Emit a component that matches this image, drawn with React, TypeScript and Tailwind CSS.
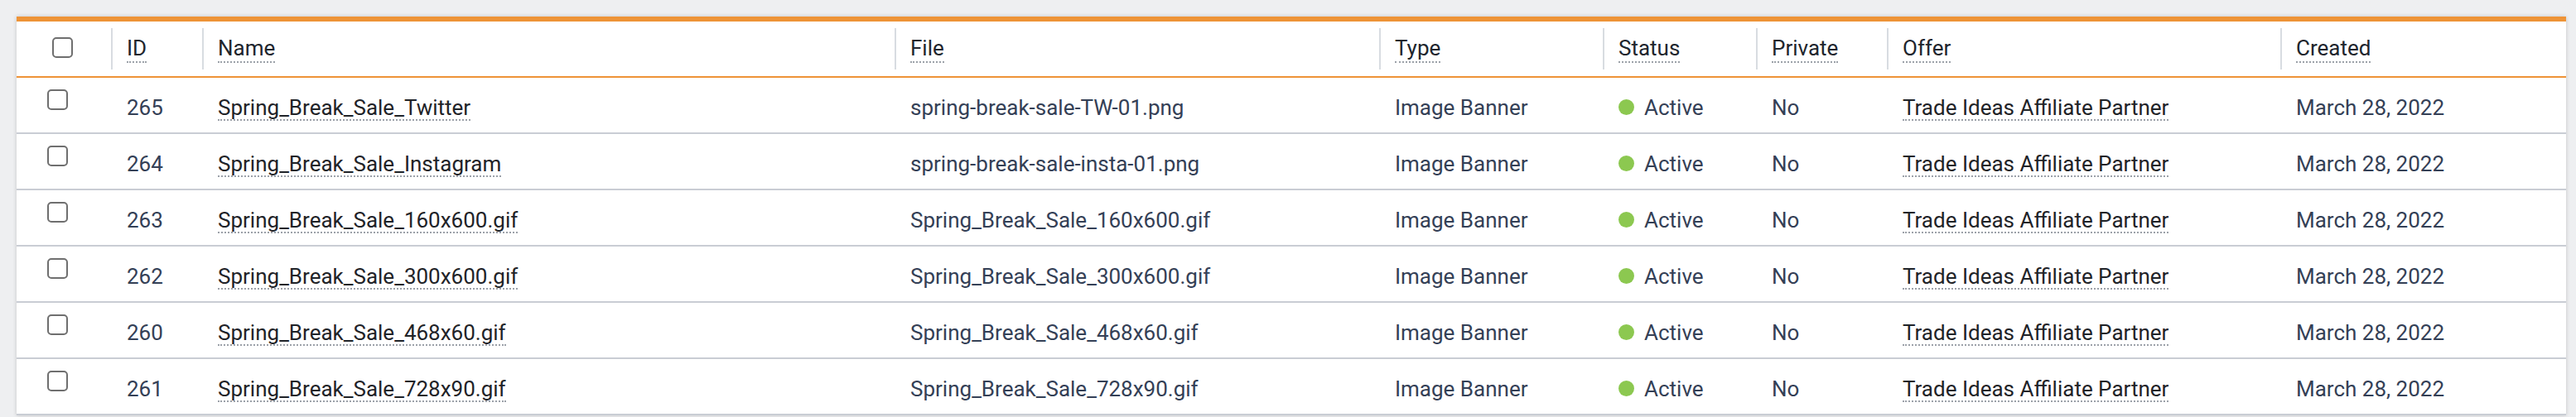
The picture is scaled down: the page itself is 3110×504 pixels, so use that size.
const creatives = [
  { id: 265, name: 'Spring_Break_Sale_Twitter', file: 'spring-break-sale-TW-01.png' },
  { id: 264, name: 'Spring_Break_Sale_Instagram', file: 'spring-break-sale-insta-01.png' },
  { id: 263, name: 'Spring_Break_Sale_160x600.gif', file: 'Spring_Break_Sale_160x600.gif' },
  { id: 262, name: 'Spring_Break_Sale_300x600.gif', file: 'Spring_Break_Sale_300x600.gif' },
  { id: 260, name: 'Spring_Break_Sale_468x60.gif', file: 'Spring_Break_Sale_468x60.gif' },
  { id: 261, name: 'Spring_Break_Sale_728x90.gif', file: 'Spring_Break_Sale_728x90.gif' },
];

const columns = ['ID', 'Name', 'File', 'Type', 'Status', 'Private', 'Offer', 'Created'];

const gridCols = 'grid grid-cols-[114px_110px_836px_585px_270px_185px_158px_475px_345px]';

const Checkbox = () => (
  <span className="block w-[25px] h-[25px] rounded-[5px] border-2 border-[#6f6f6f] bg-white" />
);

const Dotted = ({ children }: { children: React.ReactNode }) => (
  <span className="inline-block leading-[28px] border-b-2 border-dotted border-[#9ca1a9] text-[#1f2328]">
    {children}
  </span>
);

const Cell = ({ children }: { children: React.ReactNode }) => (
  <div className="pt-[17px] pl-[19px] whitespace-nowrap">{children}</div>
);

const Plain = ({ children }: { children: React.ReactNode }) => (
  <span className="inline-block leading-[28px] text-[#344056]">{children}</span>
);

export default function App() {
  return (
    <div className="min-h-[504px] bg-[#eeeff1] pt-[20px] font-['Roboto',sans-serif] text-[26px]">
      <div className="ml-[20px] w-[3078px] bg-white border-t-[6px] border-[#ee9337] shadow-[0_0_5px_rgba(0,0,0,0.18)]">
        {/* header */}
        <div className={`${gridCols} h-[68px] border-b-2 border-[#ee9337]`}>
          <div className="pl-[43px] pt-[19px]">
            <Checkbox />
          </div>
          {columns.map((col) => (
            <div key={col} className="py-[8px]">
              <div className="h-full border-l-2 border-[#d8dce1] pl-[17px] flex items-center">
                <span className="inline-block leading-[32px] border-b-2 border-dotted border-[#9ca1a9] text-[#20252d]">
                  {col}
                </span>
              </div>
            </div>
          ))}
        </div>

        {/* rows */}
        {creatives.map((c) => (
          <div key={c.id} className={`${gridCols} h-[68px] border-b-2 border-[#c9cdd4]`}>
            <div className="pl-[37px] pt-[14px]">
              <Checkbox />
            </div>
            <Cell><Plain>{c.id}</Plain></Cell>
            <Cell><Dotted>{c.name}</Dotted></Cell>
            <Cell><Plain>{c.file}</Plain></Cell>
            <Cell><Plain>Image Banner</Plain></Cell>
            <Cell>
              <span className="inline-flex items-center gap-[12px] leading-[28px] text-[#344056]">
                <span className="w-[19px] h-[19px] rounded-full bg-[#8cc850]" />
                Active
              </span>
            </Cell>
            <Cell><Plain>No</Plain></Cell>
            <Cell><Dotted>Trade Ideas Affiliate Partner</Dotted></Cell>
            <Cell><Plain>March 28, 2022</Plain></Cell>
          </div>
        ))}
      </div>
    </div>
  );
}
